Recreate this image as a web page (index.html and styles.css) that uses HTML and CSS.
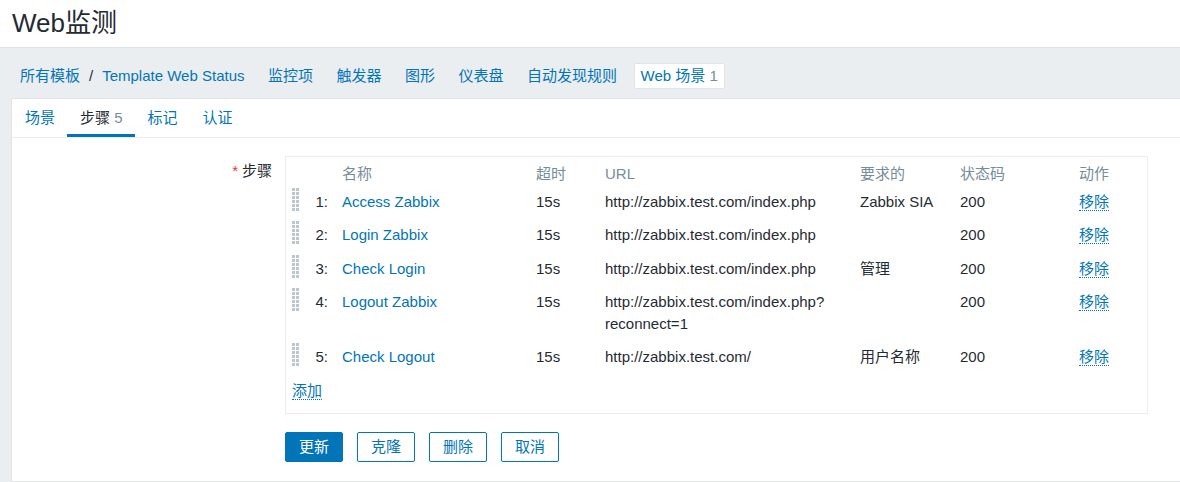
FILE: index.html
```html
<!DOCTYPE html>
<html lang="zh-CN">
<head>
<meta charset="utf-8">
<title>Web监测</title>
<link rel="stylesheet" href="styles.css">
</head>
<body>
<header class="page-header">
  <h1 class="page-title">Web监测</h1>
</header>
<nav class="crumbs">
  <div class="crumb-path"><a class="link">所有模板</a><span class="sep">/</span><a class="link">Template Web Status</a></div>
  <a class="crumb link">监控项</a>
  <a class="crumb link">触发器</a>
  <a class="crumb link">图形</a>
  <a class="crumb link">仪表盘</a>
  <a class="crumb link">自动发现规则</a>
  <a class="crumb crumb-active link">Web 场景 <span class="muted">1</span></a>
</nav>
<main class="panel">
  <ul class="tabs">
    <li class="tab"><a class="link">场景</a></li>
    <li class="tab tab-active">步骤 <span class="muted">5</span></li>
    <li class="tab"><a class="link">标记</a></li>
    <li class="tab"><a class="link">认证</a></li>
  </ul>
  <div class="form">
    <div class="form-row">
      <label class="form-label required">步骤</label>
      <div class="steps-box">
        <table class="steps">
          <colgroup>
            <col class="c-handle"><col class="c-num"><col class="c-name"><col class="c-timeout">
            <col class="c-url"><col class="c-req"><col class="c-status"><col class="c-action">
          </colgroup>
          <thead>
            <tr><th></th><th></th><th>名称</th><th>超时</th><th>URL</th><th>要求的</th><th>状态码</th><th>动作</th></tr>
          </thead>
          <tbody>
            <tr>
              <td><span class="handle"></span></td><td class="num">1:</td>
              <td><a class="link">Access Zabbix</a></td><td>15s</td>
              <td>http://zabbix.test.com/index.php</td><td>Zabbix SIA</td><td>200</td>
              <td><a class="link dotted">移除</a></td>
            </tr>
            <tr>
              <td><span class="handle"></span></td><td class="num">2:</td>
              <td><a class="link">Login Zabbix</a></td><td>15s</td>
              <td>http://zabbix.test.com/index.php</td><td></td><td>200</td>
              <td><a class="link dotted">移除</a></td>
            </tr>
            <tr>
              <td><span class="handle"></span></td><td class="num">3:</td>
              <td><a class="link">Check Login</a></td><td>15s</td>
              <td>http://zabbix.test.com/index.php</td><td>管理</td><td>200</td>
              <td><a class="link dotted">移除</a></td>
            </tr>
            <tr>
              <td><span class="handle"></span></td><td class="num">4:</td>
              <td><a class="link">Logout Zabbix</a></td><td>15s</td>
              <td>http://zabbix.test.com/index.php?<wbr>reconnect=1</td><td></td><td>200</td>
              <td><a class="link dotted">移除</a></td>
            </tr>
            <tr>
              <td><span class="handle"></span></td><td class="num">5:</td>
              <td><a class="link">Check Logout</a></td><td>15s</td>
              <td>http://zabbix.test.com/</td><td>用户名称</td><td>200</td>
              <td><a class="link dotted">移除</a></td>
            </tr>
            <tr class="add-row">
              <td colspan="8"><a class="link dotted">添加</a></td>
            </tr>
          </tbody>
        </table>
      </div>
    </div>
    <div class="buttons">
      <button class="btn btn-primary" type="button">更新</button>
      <button class="btn" type="button">克隆</button>
      <button class="btn" type="button">删除</button>
      <button class="btn" type="button">取消</button>
    </div>
  </div>
</main>
</body>
</html>
```
FILE: styles.css
```css
* { box-sizing: border-box; }
html, body { margin: 0; padding: 0; }
body {
  background: #ebeef0;
  color: #1f2c33;
  font-family: "Liberation Sans", "Noto Sans CJK SC", Arial, sans-serif;
  font-size: 15px;
  line-height: 22px;
  overflow: hidden;
}
.link { color: #0275b8; text-decoration: none; cursor: pointer; }
.muted { color: #768d99; }

.page-header {
  background: #ffffff;
  height: 48px;
  border-bottom: 1px solid #dfe4e7;
  padding-left: 12px;
}
.page-title {
  margin: 0;
  font-size: 26px;
  font-weight: normal;
  line-height: 46px;
  color: #1f2c33;
}

.crumbs {
  display: flex;
  align-items: center;
  gap: 9.5px;
  padding: 15px 0 9px 13px;
  height: 50px;
}
.crumb-path, .crumb {
  display: block;
  padding: 0 6px;
  border: 1px solid transparent;
  border-radius: 2px;
  line-height: 24px;
  white-space: nowrap;
}
.crumb-path .sep { margin: 0 9px; color: #1f2c33; }
.crumb-active { background: #ffffff; border-color: #dfe4e7; }

.panel {
  background: #ffffff;
  margin-left: 11px;
  border-left: 1px solid #dfe4e7;
  border-top: 1px solid #dfe4e7;
  border-bottom: 1px solid #dfe4e7;
}
.tabs {
  list-style: none;
  margin: 0;
  padding: 0;
  display: flex;
  border-bottom: 1px solid #ebeef0;
}
.tab {
  padding: 8px 12px 5px 13px;
  line-height: 22px;
  border-bottom: 3px solid transparent;
}
.tab-active { border-bottom-color: #0275b8; color: #1f2c33; }

.form { padding: 18px 0 19px; }
.form-row {
  display: grid;
  grid-template-columns: 260px 863px;
  column-gap: 13px;
  align-items: start;
}
.form-label {
  text-align: right;
  padding-top: 4px;
  line-height: 22px;
}
.required::before {
  content: "*";
  color: #e33734;
  margin-right: 4px;
}
.steps-box {
  border: 1px solid #ebeef0;
}
.steps {
  width: 100%;
  border-collapse: collapse;
  table-layout: fixed;
}
.c-handle { width: 24px; }
.c-num { width: 32px; }
.c-name { width: 194px; }
.c-timeout { width: 69px; }
.c-url { width: 255px; }
.c-req { width: 100px; }
.c-status { width: 119px; }
.c-action { width: 68px; }
.steps th {
  text-align: left;
  font-weight: normal;
  color: #768d99;
  padding: 6px 0 6px 0;
  line-height: 22px;
}
.steps td {
  padding: 0 0 11.33px 0;
  line-height: 22px;
  vertical-align: top;
}
.steps td.num { text-align: right; padding-right: 14px; }
.handle {
  display: block;
  width: 8px;
  height: 24px;
  margin: -3px 0 1px 6px;
  background-image:
    linear-gradient(to right, #bcc7cd 0 3px, transparent 3px 4px, #bcc7cd 4px 7px, transparent 7px 8px);
  -webkit-mask-image: linear-gradient(to bottom, #000 0 3px, transparent 3px 4px);
  -webkit-mask-size: 8px 4px;
  mask-image: linear-gradient(to bottom, #000 0 3px, transparent 3px 4px);
  mask-size: 8px 4px;
}
.steps .add-row td { padding: 0 0 11px 6px; }
.dotted { border-bottom: 1px dotted #0275b8; }

.buttons {
  display: flex;
  gap: 14px;
  margin: 18px 0 0 273px;
}
.btn {
  height: 30px;
  padding: 0 13px;
  border: 1px solid #0275b8;
  border-radius: 2px;
  background: #ffffff;
  color: #0275b8;
  font-family: inherit;
  font-size: 15px;
  line-height: 28px;
  cursor: pointer;
}
.btn-primary { background: #0275b8; color: #ffffff; }
```
